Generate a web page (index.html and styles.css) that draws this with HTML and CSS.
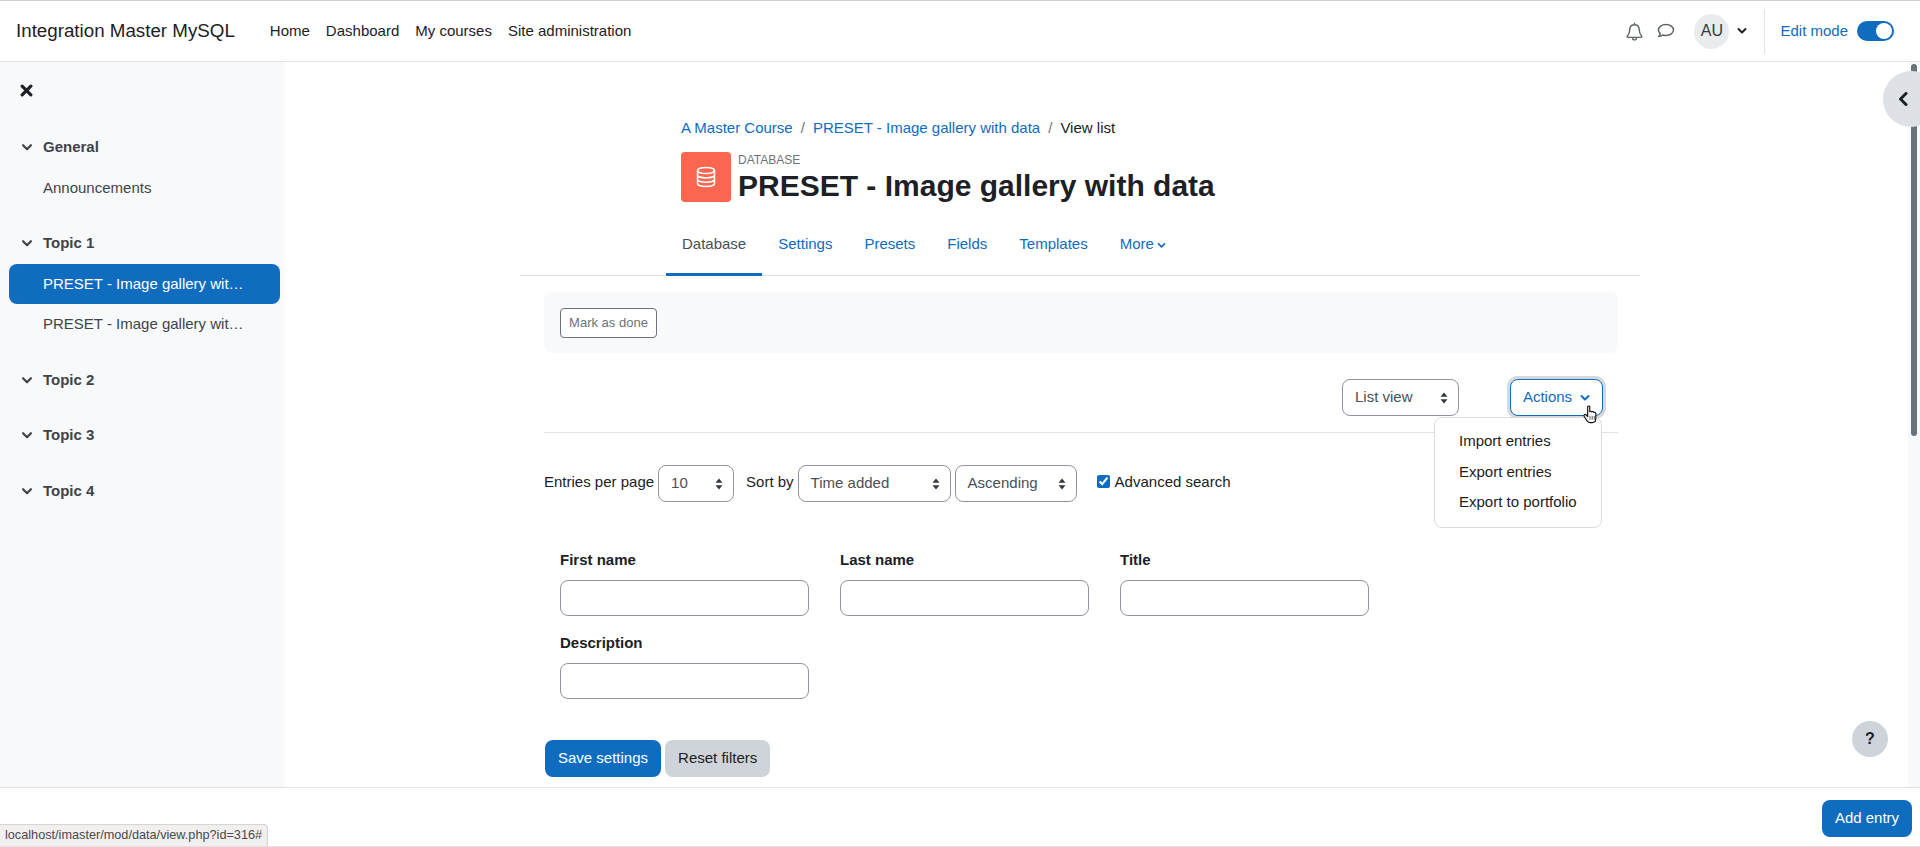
FILE: index.html
```html
<!DOCTYPE html>
<html lang="en">
<head>
<meta charset="utf-8">
<title>PRESET - Image gallery with data</title>
<link rel="stylesheet" href="styles.css">
</head>
<body>
<header class="navbar">
  <a class="brand">Integration Master MySQL</a>
  <nav class="primary">
    <a>Home</a><a>Dashboard</a><a>My courses</a><a>Site administration</a>
  </nav>
  <div class="usernav">
    <svg class="nav-ico bell" viewBox="0 0 18 20"><path d="M9 1.200v1.600M9 2.800c-3.200 0-5 2.400-5 5.200 0 4-1 5.400-2.600 7.100-.4.500-.1 1.100.5 1.100h14.200c.6 0 .9-.6.5-1.100C15 13.400 14 12 14 8c0-2.800-1.800-5.200-5-5.200zM7 17.200c0 1 .9 1.700 2 1.700s2-.7 2-1.700"/></svg>
    <svg class="nav-ico chat" viewBox="0 0 18 18"><path d="M9 2.500c-4.200 0-7.500 2.400-7.500 5.500 0 1.400.7 2.600 1.800 3.600-.2 1-.9 2.100-1.600 2.900 1.500-.1 3-.7 4-1.500 1 .3 2.100.5 3.300.5 4.200 0 7.500-2.400 7.500-5.500S13.200 2.500 9 2.500z"/></svg>
    <span class="avatar">AU</span>
    <svg class="chev dark" viewBox="0 0 10 8"><path d="M1.500 2l3.500 3.500L8.500 2"/></svg>
    <span class="divider"></span>
    <span class="editlabel">Edit mode</span>
    <span class="switch"><span class="knob"></span></span>
  </div>
</header>

<div class="middle">
  <aside class="sidebar">
    <svg class="closex" viewBox="0 0 12 12"><path d="M2 2l8 8M10 2l-8 8"/></svg>
    <section class="sec">
      <h3 class="sec-title"><svg class="chev dark2" viewBox="0 0 10 8"><path d="M1.500 2l3.500 3.500L8.500 2"/></svg>General</h3>
      <a class="item">Announcements</a>
    </section>
    <section class="sec">
      <h3 class="sec-title"><svg class="chev dark2" viewBox="0 0 10 8"><path d="M1.500 2l3.500 3.500L8.500 2"/></svg>Topic 1</h3>
      <a class="item active">PRESET - Image gallery wit…</a>
      <a class="item">PRESET - Image gallery wit…</a>
    </section>
    <section class="sec">
      <h3 class="sec-title"><svg class="chev dark2" viewBox="0 0 10 8"><path d="M1.500 2l3.500 3.500L8.500 2"/></svg>Topic 2</h3>
    </section>
    <section class="sec">
      <h3 class="sec-title"><svg class="chev dark2" viewBox="0 0 10 8"><path d="M1.500 2l3.500 3.500L8.500 2"/></svg>Topic 3</h3>
    </section>
    <section class="sec">
      <h3 class="sec-title"><svg class="chev dark2" viewBox="0 0 10 8"><path d="M1.500 2l3.500 3.500L8.500 2"/></svg>Topic 4</h3>
    </section>
  </aside>

  <main class="main">
    <div class="container">
      <div class="pagehead">
        <nav class="crumbs"><a>A Master Course</a><span class="sep">/</span><a>PRESET - Image gallery with data</a><span class="sep">/</span><span class="here">View list</span></nav>
        <div class="titlerow">
          <span class="dbicon"><svg viewBox="0 0 24 24"><ellipse cx="12" cy="5.500" rx="8.500" ry="3"/><path d="M3.500 5.500v13c0 1.700 3.800 3 8.500 3s8.500-1.300 8.500-3v-13M3.500 9.900c0 1.700 3.800 3 8.500 3s8.500-1.300 8.500-3M3.500 14.300c0 1.700 3.800 3 8.500 3s8.500-1.300 8.500-3"/></svg></span>
          <div class="titletext">
            <div class="modname">DATABASE</div>
            <h1>PRESET - Image gallery with data</h1>
          </div>
        </div>
      </div>
      <nav class="tabs">
        <a class="tab current">Database</a><a class="tab">Settings</a><a class="tab">Presets</a><a class="tab">Fields</a><a class="tab">Templates</a><a class="tab">More<svg class="chev blue small" viewBox="0 0 10 8"><path d="M1.500 2l3.500 3.500L8.500 2"/></svg></a>
      </nav>
      <div class="region">
        <div class="completion"><button class="markdone">Mark as done</button></div>
        <div class="tertiary">
          <div class="select listview"><span>List view</span><svg class="caret" viewBox="0 0 8 12"><path d="M4 0.500L7.500 4.800H0.500zM4 11.500L0.500 7.200H7.500z"/></svg></div>
          <button class="actions">Actions<svg class="chev blue" viewBox="0 0 10 8"><path d="M1.500 2l3.500 3.500L8.500 2"/></svg></button>
        </div>
        <div class="filters">
          <label>Entries per page</label>
          <div class="select perpage"><span>10</span><svg class="caret" viewBox="0 0 8 12"><path d="M4 0.500L7.500 4.800H0.500zM4 11.500L0.500 7.200H7.500z"/></svg></div>
          <label class="sortby">Sort by</label>
          <div class="select timeadded"><span>Time added</span><svg class="caret" viewBox="0 0 8 12"><path d="M4 0.500L7.500 4.800H0.500zM4 11.500L0.500 7.200H7.500z"/></svg></div>
          <div class="select asc"><span>Ascending</span><svg class="caret" viewBox="0 0 8 12"><path d="M4 0.500L7.500 4.800H0.500zM4 11.500L0.500 7.200H7.500z"/></svg></div>
          <label class="adv"><input type="checkbox" checked>Advanced search</label>
        </div>
        <div class="fields">
          <div class="field"><label>First name</label><input type="text"></div>
          <div class="field"><label>Last name</label><input type="text"></div>
          <div class="field"><label>Title</label><input type="text"></div>
          <div class="field"><label>Description</label><input type="text"></div>
        </div>
        <div class="formbtns">
          <button class="btn primary-btn">Save settings</button>
          <button class="btn secondary-btn">Reset filters</button>
        </div>
      </div>
    </div>
  </main>

  <div class="scroll"><span class="thumb"></span></div>

  <div class="menu">
    <a>Import entries</a><a>Export entries</a><a>Export to portfolio</a>
  </div>
  <svg class="handcursor" viewBox="0 0 16 20"><path d="M5 2.200c0-1.500 2.200-1.500 2.200 0v5c.5-1 2-.8 2.200.2.600-.8 2-.5 2.200.5.700-.5 2-.1 2 1v5.300c0 2.500-1.600 4.300-3.800 4.300H7.500c-1.600 0-2.500-.8-3.300-2L1.300 11.800c-.8-1.300 1-2.500 2-1.400L5 12.200z"/><path class="fine" d="M7.500 11.500v4M9.800 11.500v4M12 11.500v4"/></svg>
  <button class="drawertoggle"><svg viewBox="0 0 10 14"><path d="M8 1.500L2.500 7 8 12.500"/></svg></button>
  <button class="help">?</button>
</div>

<footer class="foot">
  <button class="btn primary-btn addentry">Add entry</button>
</footer>
<div class="status">localhost/imaster/mod/data/view.php?id=316#</div>
</body>
</html>
```
FILE: styles.css
```css
* { box-sizing: border-box; }
html, body { margin: 0; height: 847px; overflow: hidden; }
body {
  display: flex; flex-direction: column; position: relative;
  font-family: "Liberation Sans", Arial, sans-serif; font-size: 15px; line-height: 22.5px;
  color: #1d2125; background: #fff;
  border-top: 1px solid #d0d2d4; border-bottom: 1px solid #e1e3e5;
}
a { color: inherit; text-decoration: none; }
button { font: inherit; }
h1, h3 { margin: 0; }

.navbar { height: 61px; flex: none; display: flex; align-items: center; padding: 0 26px 0 16px; border-bottom: 1px solid #e1e3e5; }
.brand { font-size: 18.750px; color: #1d2125; margin-right: 35px; }
.primary { display: flex; gap: 16px; }
.primary a { color: #1d2125; }
.usernav { margin-left: auto; display: flex; align-items: center; }
.nav-ico { fill: none; stroke: #5f6468; stroke-width: 1.500; stroke-linejoin: round; stroke-linecap: round; }
.bell { width: 17px; height: 19px; margin-right: 14px; }
.chat { width: 18px; height: 18px; margin-right: 19px; }
.avatar { width: 35px; height: 35px; border-radius: 50%; background: #e9ecef; display: flex; align-items: center; justify-content: center; color: #343a40; margin-right: 8px; font-size: 16px; }
.chev { width: 10px; height: 8px; fill: none; stroke-width: 2; stroke-linecap: round; stroke-linejoin: round; flex: none; }
.chev.dark { stroke: #1d2125; width: 10px; margin-right: 17px; }
.chev.dark2 { stroke: #3f4449; width: 12px; height: 9px; margin-right: 10px; }
.chev.blue { stroke: #0f6cbf; }
.chev.small { width: 9px; height: 7px; margin-left: 3px; }
.divider { width: 1px; height: 45px; background: #e1e3e5; margin-right: 15px; }
.editlabel { color: #0f6cbf; margin-right: 9px; }
.switch { width: 37px; height: 20px; border-radius: 10px; background: #0f6cbf; display: flex; justify-content: flex-end; align-items: center; padding: 0 2px; }
.knob { width: 16px; height: 16px; border-radius: 50%; background: #fff; }

.middle { flex: 1; min-height: 0; display: flex; position: relative; }
.sidebar { width: 285px; flex: none; background: #f8f9fa; padding: 17px 5px 0 9px; color: #3f4449; }
.closex { display: block; width: 13px; height: 13px; margin: 5px 0 0 11px; fill: none; stroke: #1d2125; stroke-width: 3; stroke-linecap: round; }
.sec { padding-bottom: 17.500px; }
.sec:first-of-type { margin-top: 33px; }
.sec-title { font-size: 15px; font-weight: 700; color: #3f4449; display: flex; align-items: center; height: 34px; padding-left: 12px; margin-bottom: 4px; }
.item { display: block; height: 40px; line-height: 40px; padding-left: 34px; border-radius: 8px; }
.item:last-child { margin-bottom: 1px; }
.item.active { background: #0f6cbf; color: #fff; margin-top: -1px; }
.item.active + .item { margin-bottom: 2px; }

.main { flex: 1; min-width: 0; display: flex; justify-content: flex-start; padding-top: 55px; padding-left: 235px; }
.container { width: 1120px; }
.pagehead { padding-left: 161px; }
.crumbs { display: flex; color: #0f6cbf; height: 23px; align-items: center; margin-bottom: 12px; }
.sep { color: #6a737b; margin: 0 8px; }
.here { color: #1d2125; }
.titlerow { display: flex; gap: 7px; align-items: flex-start; }
.dbicon { width: 50px; height: 50px; background: #fa6650; border-radius: 4px; display: flex; align-items: center; justify-content: center; flex: none; }
.dbicon svg { width: 24px; height: 24px; fill: none; stroke: #fff; stroke-width: 1.500; }
.titletext { padding-top: 2px; }
.modname { font-size: 12px; line-height: 12px; color: #6a737b; margin-bottom: 2px; }
h1 { font-size: 30px; line-height: 36px; font-weight: 700; color: #1d2125; }

.tabs { display: flex; padding-left: 146px; margin-top: 18px; border-bottom: 1px solid #dee2e6; height: 54px; }
.tab { padding: 0 16px; height: 54px; line-height: 44px; color: #0f6cbf; }
.tab.current { color: #495057; border-bottom: 3px solid #0f6cbf; }

.region { padding: 16px 22px 0 24px; }
.completion { height: 61px; background: #f8f9fa; border-radius: 8px; padding: 16px; }
.markdone { height: 30px; width: 97px; padding: 0; background: #fff; border: 1px solid #6a737b; border-radius: 4px; color: #6a737b; font-size: 13px; display: block; }
.tertiary { height: 80px; margin-top: 0; padding: 26px 15px 0 0; display: flex; justify-content: flex-end; gap: 51px; border-bottom: 1px solid #e1e3e5; }
.select { height: 37px; border: 1px solid #8f959e; border-radius: 8px; display: flex; align-items: center; justify-content: space-between; padding: 0 10px 0 12px; color: #495057; background: #fff; flex: none; }
.caret { width: 8px; height: 12px; fill: #343a40; flex: none; }
.listview { width: 117px; }
.actions { width: 93px; height: 37px; border: 1px solid #0f6cbf; border-radius: 8px; background: #fff; color: #0f6cbf; box-shadow: 0 0 0 3px #d5d8dc; display: flex; align-items: center; justify-content: center; gap: 8px; padding: 0; }
.filters { display: flex; align-items: center; margin-top: 32px; height: 37px; }
.filters label { white-space: nowrap; position: relative; top: -1px; }
.perpage { width: 76px; margin-left: 4px; }
.sortby { margin-left: 12px; }
.timeadded { width: 153px; margin-left: 4px; }
.asc { width: 122px; margin-left: 4px; }
.filters .adv { margin-left: 20px; display: flex; align-items: center; }
.adv input { accent-color: #0f6cbf; width: 13px; height: 13px; margin: 0 5px 0 0; position: relative; top: -1px; }

.fields { display: grid; grid-template-columns: repeat(3, 249px); column-gap: 31px; row-gap: 15px; padding: 46px 0 0 16px; }
.field label { display: block; font-weight: 700; height: 32px; line-height: 24px; }
.field input { display: block; width: 249px; height: 36px; border: 1px solid #8f959e; border-radius: 8px; background: #fff; padding: 0; }

.formbtns { display: flex; gap: 4px; padding: 41px 0 0 1px; }
.btn { height: 37px; border: none; border-radius: 8px; padding: 0 13px; }
.primary-btn { background: #0f6cbf; color: #fff; }
.secondary-btn { background: #ced4da; color: #1d2125; }

.scroll { width: 12px; flex: none; background: #f8f9fa; padding: 2px 3px; }
.thumb { display: block; width: 6px; height: 372px; background: #6a737b; border-radius: 3px; }
.menu { position: absolute; left: 1434px; top: 355px; width: 168px; height: 111px; background: #fff; border: 1px solid #d9dcdf; border-radius: 8px; padding: 8px 0 0 24px; display: flex; flex-direction: column; color: #1d2125; }
.menu a { height: 30.500px; line-height: 30.500px; white-space: nowrap; }
.handcursor { position: absolute; left: 1582px; top: 343px; width: 17px; height: 19px; fill: #fff; stroke: #111; stroke-width: 1.200; stroke-linejoin: round; }
.handcursor .fine { stroke-width: .7; fill: none; }
.drawertoggle { position: absolute; left: 1883px; top: 9px; width: 56px; height: 56px; border-radius: 50%; border: none; background: #dee2e6; padding: 0 0 0 15px; display: flex; align-items: center; }
.drawertoggle svg { width: 10px; height: 14px; fill: none; stroke: #1d2125; stroke-width: 3; stroke-linecap: round; stroke-linejoin: round; }
.help { position: absolute; left: 1852px; top: 659px; width: 36px; height: 36px; border-radius: 50%; border: none; background: #ced4da; color: #1d2125; font-weight: 700; font-size: 16px; padding: 0; }

.foot { height: 59px; flex: none; display: flex; justify-content: flex-end; align-items: flex-start; padding: 12px 8px 0 0; border-top: 1px solid #e1e3e5; background: #fff; }
.addentry { width: 90px; padding: 0; }
.status { position: absolute; left: 0; bottom: 0; width: 268px; height: 22px; line-height: 21px; padding: 0 0 0 5px; font-size: 12.700px; white-space: nowrap; color: #4a4a4a; background: #f1f0ef; border: 1px solid #d5d5d5; border-left: none; border-bottom: none; border-top-right-radius: 4px; }
```
